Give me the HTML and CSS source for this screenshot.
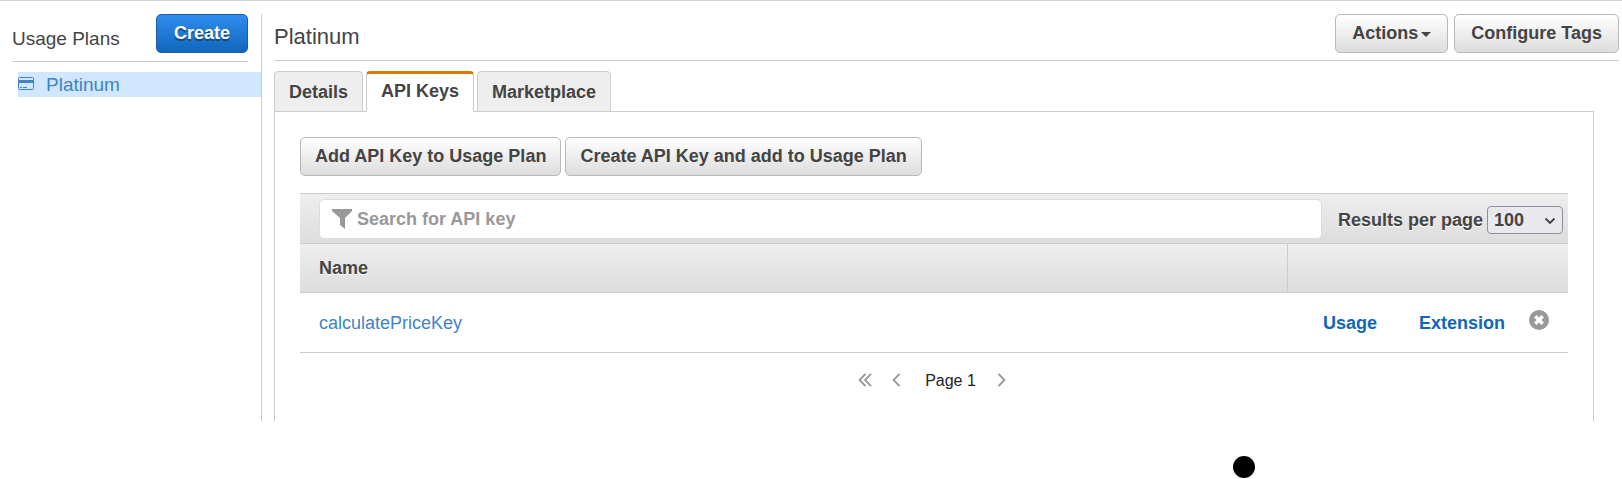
FILE: index.html
```html
<!DOCTYPE html>
<html lang="en">
<head>
<meta charset="utf-8">
<meta name="viewport" content="width=device-width, initial-scale=1">
<title>Usage Plans</title>
<link rel="stylesheet" href="styles.css">
</head>
<body>
<div class="layout">
  <aside class="sidebar">
    <header class="sidebar-head">
      <h2 class="sidebar-title">Usage Plans</h2>
      <button type="button" class="btn btn-primary">Create</button>
    </header>
    <nav class="plans">
      <a class="plan" href="#platinum">
        <svg class="plan-icon" viewBox="0 0 16 13" aria-hidden="true">
          <rect x=".5" y=".5" width="15" height="12" rx="1" fill="none" stroke="currentColor"/>
          <path d="M0 3h16v3H0zM2 10h2v1H2zM5 10h4v1H5z" fill="currentColor"/>
        </svg>
        <span>Platinum</span>
      </a>
    </nav>
  </aside>

  <main class="content">
    <header class="content-head">
      <h1 class="content-title">Platinum</h1>
      <div class="head-actions">
        <button type="button" class="btn">Actions<span class="caret"></span></button>
        <button type="button" class="btn">Configure Tags</button>
      </div>
    </header>

    <div class="tabs" role="tablist">
      <button type="button" class="tab" role="tab" aria-selected="false">Details</button>
      <button type="button" class="tab tab-active" role="tab" aria-selected="true">API Keys</button>
      <button type="button" class="tab" role="tab" aria-selected="false">Marketplace</button>
    </div>

    <section class="panel" role="tabpanel">
      <div class="key-actions">
        <button type="button" class="btn">Add API Key to Usage Plan</button>
        <button type="button" class="btn">Create API Key and add to Usage Plan</button>
      </div>

      <div class="toolbar">
        <label class="search">
          <svg class="search-icon" viewBox="0 0 20 20" aria-hidden="true">
            <path d="M0 0h20v2l-7 7v11l-5-4V9L0 2z" fill="currentColor"/>
          </svg>
          <input class="search-input" type="text" placeholder="Search for API key" aria-label="Search for API key">
        </label>
        <div class="page-size">
          <label for="page-size">Results per page</label>
          <span class="select-wrap">
            <select id="page-size" class="select">
              <option>100</option>
              <option>50</option>
              <option>25</option>
            </select>
            <svg class="select-arrow" viewBox="0 0 12 8" aria-hidden="true">
              <path d="M1.500 1.500L6 6l4.500-4.500" fill="none" stroke="currentColor" stroke-width="1.800"/>
            </svg>
          </span>
        </div>
      </div>

      <table class="keys">
        <thead>
          <tr>
            <th scope="col">Name</th>
            <th scope="col" class="col-actions" aria-label="Actions"></th>
          </tr>
        </thead>
        <tbody>
          <tr>
            <td><a class="key-link" href="#key">calculatePriceKey</a></td>
            <td>
              <div class="row-actions">
                <div class="row-links">
                  <a class="row-link" href="#usage">Usage</a>
                  <a class="row-link" href="#extension">Extension</a>
                </div>
                <button type="button" class="remove" aria-label="Remove">
                  <svg class="remove-icon" viewBox="0 0 20 20" aria-hidden="true">
                    <circle cx="10" cy="10" r="10" fill="#999"/>
                    <path d="M6.300 6.300l7.400 7.400M13.700 6.300l-7.400 7.400" stroke="#fff" stroke-width="3.400"/>
                  </svg>
                </button>
              </div>
            </td>
          </tr>
        </tbody>
      </table>

      <nav class="pager" aria-label="Pages">
        <button type="button" class="pager-btn" aria-label="First page">
          <svg class="pager-first" viewBox="0 0 14 14" aria-hidden="true">
            <path d="M7.500 1L1.500 7l6 6M13 1L7 7l6 6" fill="none" stroke="currentColor" stroke-width="1.800"/>
          </svg>
        </button>
        <button type="button" class="pager-btn" aria-label="Previous page">
          <svg class="pager-step" viewBox="0 0 9 14" aria-hidden="true">
            <path d="M7.500 1l-6 6 6 6" fill="none" stroke="currentColor" stroke-width="1.800"/>
          </svg>
        </button>
        <span class="pager-label">Page 1</span>
        <button type="button" class="pager-btn" aria-label="Next page">
          <svg class="pager-step" viewBox="0 0 9 14" aria-hidden="true">
            <path d="M1.500 1l6 6-6 6" fill="none" stroke="currentColor" stroke-width="1.800"/>
          </svg>
        </button>
      </nav>
    </section>
  </main>
</div>
<footer class="footer"><span class="dot"></span></footer>
</body>
</html>
```
FILE: styles.css
```css
* {
  box-sizing: border-box;
}

body {
  margin: 0;
  border-top: 1px solid #d5d5d5;
  background: #fff;
  color: #444;
  font-family: "Liberation Sans", Arial, sans-serif;
  font-size: 18px;
  line-height: 24px;
}

button,
input,
select {
  font: inherit;
  color: inherit;
}

a {
  text-decoration: none;
}

svg {
  display: block;
}

.layout {
  display: flex;
  padding-top: 13px;
}

/* Sidebar */
.sidebar {
  flex: 0 0 262px;
  border-right: 1px solid #ccc;
}

.sidebar-head {
  display: flex;
  justify-content: space-between;
  align-items: center;
  margin: 0 13px 0 12px;
  padding-bottom: 8px;
  border-bottom: 1px solid #ccc;
}

.sidebar-title {
  margin: 0;
  padding-top: 10px;
  font-size: 19px;
  font-weight: normal;
}

.plans {
  padding: 10px 0 0 18px;
}

.plan {
  display: flex;
  align-items: center;
  gap: 12px;
  height: 25px;
  background: #d0e7ff;
  color: #4183c4;
  font-size: 19px;
}

.plan-icon {
  width: 16px;
  height: 13px;
  margin-bottom: 2px;
}

/* Buttons */
.btn {
  height: 39px;
  padding: 0 14px 2px;
  border: 1px solid #b8b8b8;
  border-radius: 5px;
  background: linear-gradient(#fff, #ddd);
  font-weight: bold;
  white-space: nowrap;
}

.btn-primary {
  padding: 0 17px 2px;
  border-color: #1a5fa8;
  background: linear-gradient(#2f8ded, #1166bb);
  color: #fff;
  text-shadow: 0 2px 1px rgba(0, 0, 0, 0.4);
}

.caret {
  display: inline-block;
  margin-left: 3px;
  border: 5px solid transparent;
  border-top-color: #444;
  border-bottom: 0;
  vertical-align: middle;
}

/* Content */
.content {
  flex: 1;
  min-width: 0;
  padding: 0 3px 0 12px;
}

.content-head {
  display: flex;
  justify-content: space-between;
  align-items: center;
  padding-bottom: 7px;
  border-bottom: 1px solid #ccc;
}

.content-title {
  margin: 0;
  padding-top: 6px;
  font-size: 22px;
  font-weight: normal;
}

.head-actions {
  display: flex;
  gap: 6px;
}

.head-actions .btn {
  padding: 0 16px 1px;
}

.tabs {
  display: flex;
  gap: 3px;
  margin: 10px 25px -1px 0;
}

.tab {
  height: 41px;
  padding: 0 14px;
  border: 1px solid #ccc;
  border-radius: 4px 4px 0 0;
  background: #eee;
  font-weight: bold;
}

.tab-active {
  padding-bottom: 4px;
  border-top: 3px solid #dd7700;
  border-bottom-color: #fff;
  background: #fff;
}

.panel {
  margin-right: 25px;
  padding: 25px 25px 28px;
  border: 1px solid #ccc;
  border-bottom: 0;
}

.key-actions {
  display: flex;
  gap: 4px;
  margin-bottom: 17px;
}

/* Toolbar */
.toolbar {
  display: flex;
  align-items: center;
  gap: 16px;
  height: 50px;
  padding: 0 5px 0 19px;
  border-top: 1px solid #ccc;
  background: linear-gradient(#eee, #ddd);
  font-weight: bold;
}

.search {
  display: flex;
  flex: 1;
  align-items: center;
  gap: 5px;
  height: 40px;
  padding-left: 12px;
  border: 1px solid #ddd;
  border-radius: 5px;
  background: #fff;
  color: #999;
}

.search-icon {
  width: 20px;
  height: 20px;
}

.search-input {
  flex: 1;
  min-width: 0;
  padding: 0;
  border: 0;
  outline: 0;
  background: transparent;
  font-weight: bold;
}

.search-input::placeholder {
  color: #999;
  opacity: 1;
}

.page-size {
  display: flex;
  align-items: center;
  gap: 4px;
  padding-top: 2px;
  text-shadow: 0 1px 0 #fff;
}

.select-wrap {
  position: relative;
}

.select {
  display: block;
  width: 76px;
  height: 28px;
  padding: 0 6px;
  border: 1px solid #8f8f9d;
  border-radius: 4px;
  background: #e9e9ed;
  appearance: none;
}

.select-arrow {
  position: absolute;
  top: 11px;
  right: 7px;
  width: 12px;
  height: 8px;
  pointer-events: none;
}

/* Keys table */
.keys {
  width: 100%;
  border-collapse: separate;
  border-spacing: 0;
}

.keys th {
  height: 50px;
  padding: 0 19px;
  border-top: 1px solid #ccc;
  border-bottom: 1px solid #ccc;
  background: linear-gradient(#eee, #ddd);
  text-align: left;
  text-shadow: 0 1px 0 #fff;
}

.keys .col-actions {
  width: 281px;
  border-left: 1px solid #ccc;
}

.keys td {
  height: 60px;
  padding: 0 19px;
  border-bottom: 1px solid #ccc;
}

.key-link {
  color: #4183c4;
}

.row-actions {
  display: flex;
  justify-content: flex-end;
  align-items: center;
  gap: 24px;
}

.row-links {
  display: flex;
  gap: 42px;
}

.row-link {
  color: #1166bb;
  font-weight: bold;
}

.remove {
  margin: 0 0 5px;
  padding: 0;
  border: 0;
  background: none;
}

.remove-icon {
  width: 20px;
  height: 20px;
}

/* Pager */
.pager {
  display: flex;
  justify-content: center;
  align-items: center;
  gap: 20px;
  padding-top: 14px;
  padding-right: 4px;
  color: #222;
  font-size: 16px;
}

.pager-btn {
  padding: 0;
  border: 0;
  background: none;
  color: #999;
}

.pager-label {
  padding: 2px 1px 0 4px;
}

.pager-first {
  width: 14px;
  height: 14px;
}

.pager-step {
  width: 9px;
  height: 14px;
}

.footer {
  padding: 35px 0 0 76%;
}

.dot {
  display: block;
  width: 22px;
  height: 22px;
  border-radius: 50%;
  background: #000;
}
```
